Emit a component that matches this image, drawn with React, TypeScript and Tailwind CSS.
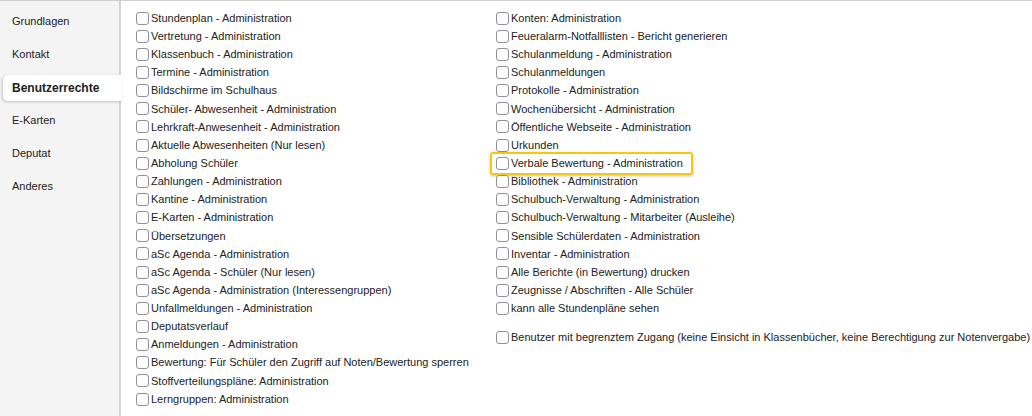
import React from 'react'

const tabs = ['Grundlagen', 'Kontakt', 'Benutzerrechte', 'E-Karten', 'Deputat', 'Anderes']

const left = [
  'Stundenplan - Administration',
  'Vertretung - Administration',
  'Klassenbuch - Administration',
  'Termine - Administration',
  'Bildschirme im Schulhaus',
  'Schüler- Abwesenheit - Administration',
  'Lehrkraft-Anwesenheit - Administration',
  'Aktuelle Abwesenheiten (Nur lesen)',
  'Abholung Schüler',
  'Zahlungen - Administration',
  'Kantine - Administration',
  'E-Karten - Administration',
  'Übersetzungen',
  'aSc Agenda - Administration',
  'aSc Agenda - Schüler (Nur lesen)',
  'aSc Agenda - Administration (Interessengruppen)',
  'Unfallmeldungen - Administration',
  'Deputatsverlauf',
  'Anmeldungen - Administration',
  'Bewertung: Für Schüler den Zugriff auf Noten/Bewertung sperren',
  'Stoffverteilungspläne: Administration',
  'Lerngruppen: Administration',
]

const right = [
  'Konten: Administration',
  'Feueralarm-Notfalllisten - Bericht generieren',
  'Schulanmeldung - Administration',
  'Schulanmeldungen',
  'Protokolle - Administration',
  'Wochenübersicht - Administration',
  'Öffentliche Webseite - Administration',
  'Urkunden',
  'Verbale Bewertung - Administration',
  'Bibliothek - Administration',
  'Schulbuch-Verwaltung - Administration',
  'Schulbuch-Verwaltung - Mitarbeiter (Ausleihe)',
  'Sensible Schülerdaten - Administration',
  'Inventar - Administration',
  'Alle Berichte (in Bewertung) drucken',
  'Zeugnisse / Abschriften - Alle Schüler',
  'kann alle Stundenpläne sehen',
]

function Row({ label, highlight }: { label: string; highlight?: boolean }) {
  return (
    <div className="relative flex h-[18.15px] items-center">
      {highlight && (
        <div className="absolute -left-[6px] top-[-2px] h-[23px] w-[203px] rounded-[3px] border-2 border-[#f2c811] shadow-[0_1px_3px_rgba(0,0,0,0.25)]" />
      )}
      <span className="mr-[2px] h-[13px] w-[13px] shrink-0 rounded-[3px] border border-[#8f8f9d] bg-white" />
      <span className="whitespace-nowrap text-[11px] text-[#222]">{label}</span>
    </div>
  )
}

export default function App() {
  return (
    <div
      className="flex h-[416px] w-[1032px] overflow-hidden border-t border-[#cfcfcf] bg-white"
      style={{ fontFamily: '"Liberation Sans", Arial, sans-serif' }}
    >
      <div className="relative w-[121px] shrink-0 border-r-2 border-[#d4d4d4] bg-[#f4f4f4] pt-[4px]">
        {tabs.map((t) => {
          const active = t === 'Benutzerrechte'
          return (
            <div
              key={t}
              className={
                active
                  ? 'relative z-10 ml-[3px] mr-[-3px] my-[3.5px] flex h-[26px] items-center rounded-l-[5px] bg-white pl-[9px] text-[12px] font-bold text-[#222] shadow-[-1px_1px_3px_rgba(0,0,0,0.2)]'
                  : 'flex h-[33px] items-center pl-[12px] text-[11px] text-[#222]'
              }
            >
              {t}
            </div>
          )
        })}
      </div>
      <div className="flex pl-[15px] pt-[8px]">
        <div className="w-[360px]">
          {left.map((l) => (
            <Row key={l} label={l} />
          ))}
        </div>
        <div>
          {right.map((l) => (
            <Row key={l} label={l} highlight={l === 'Verbale Bewertung - Administration'} />
          ))}
          <div className="mt-[11px]">
            <Row label="Benutzer mit begrenztem Zugang (keine Einsicht in Klassenbücher, keine Berechtigung zur Notenvergabe)" />
          </div>
        </div>
      </div>
    </div>
  )
}
